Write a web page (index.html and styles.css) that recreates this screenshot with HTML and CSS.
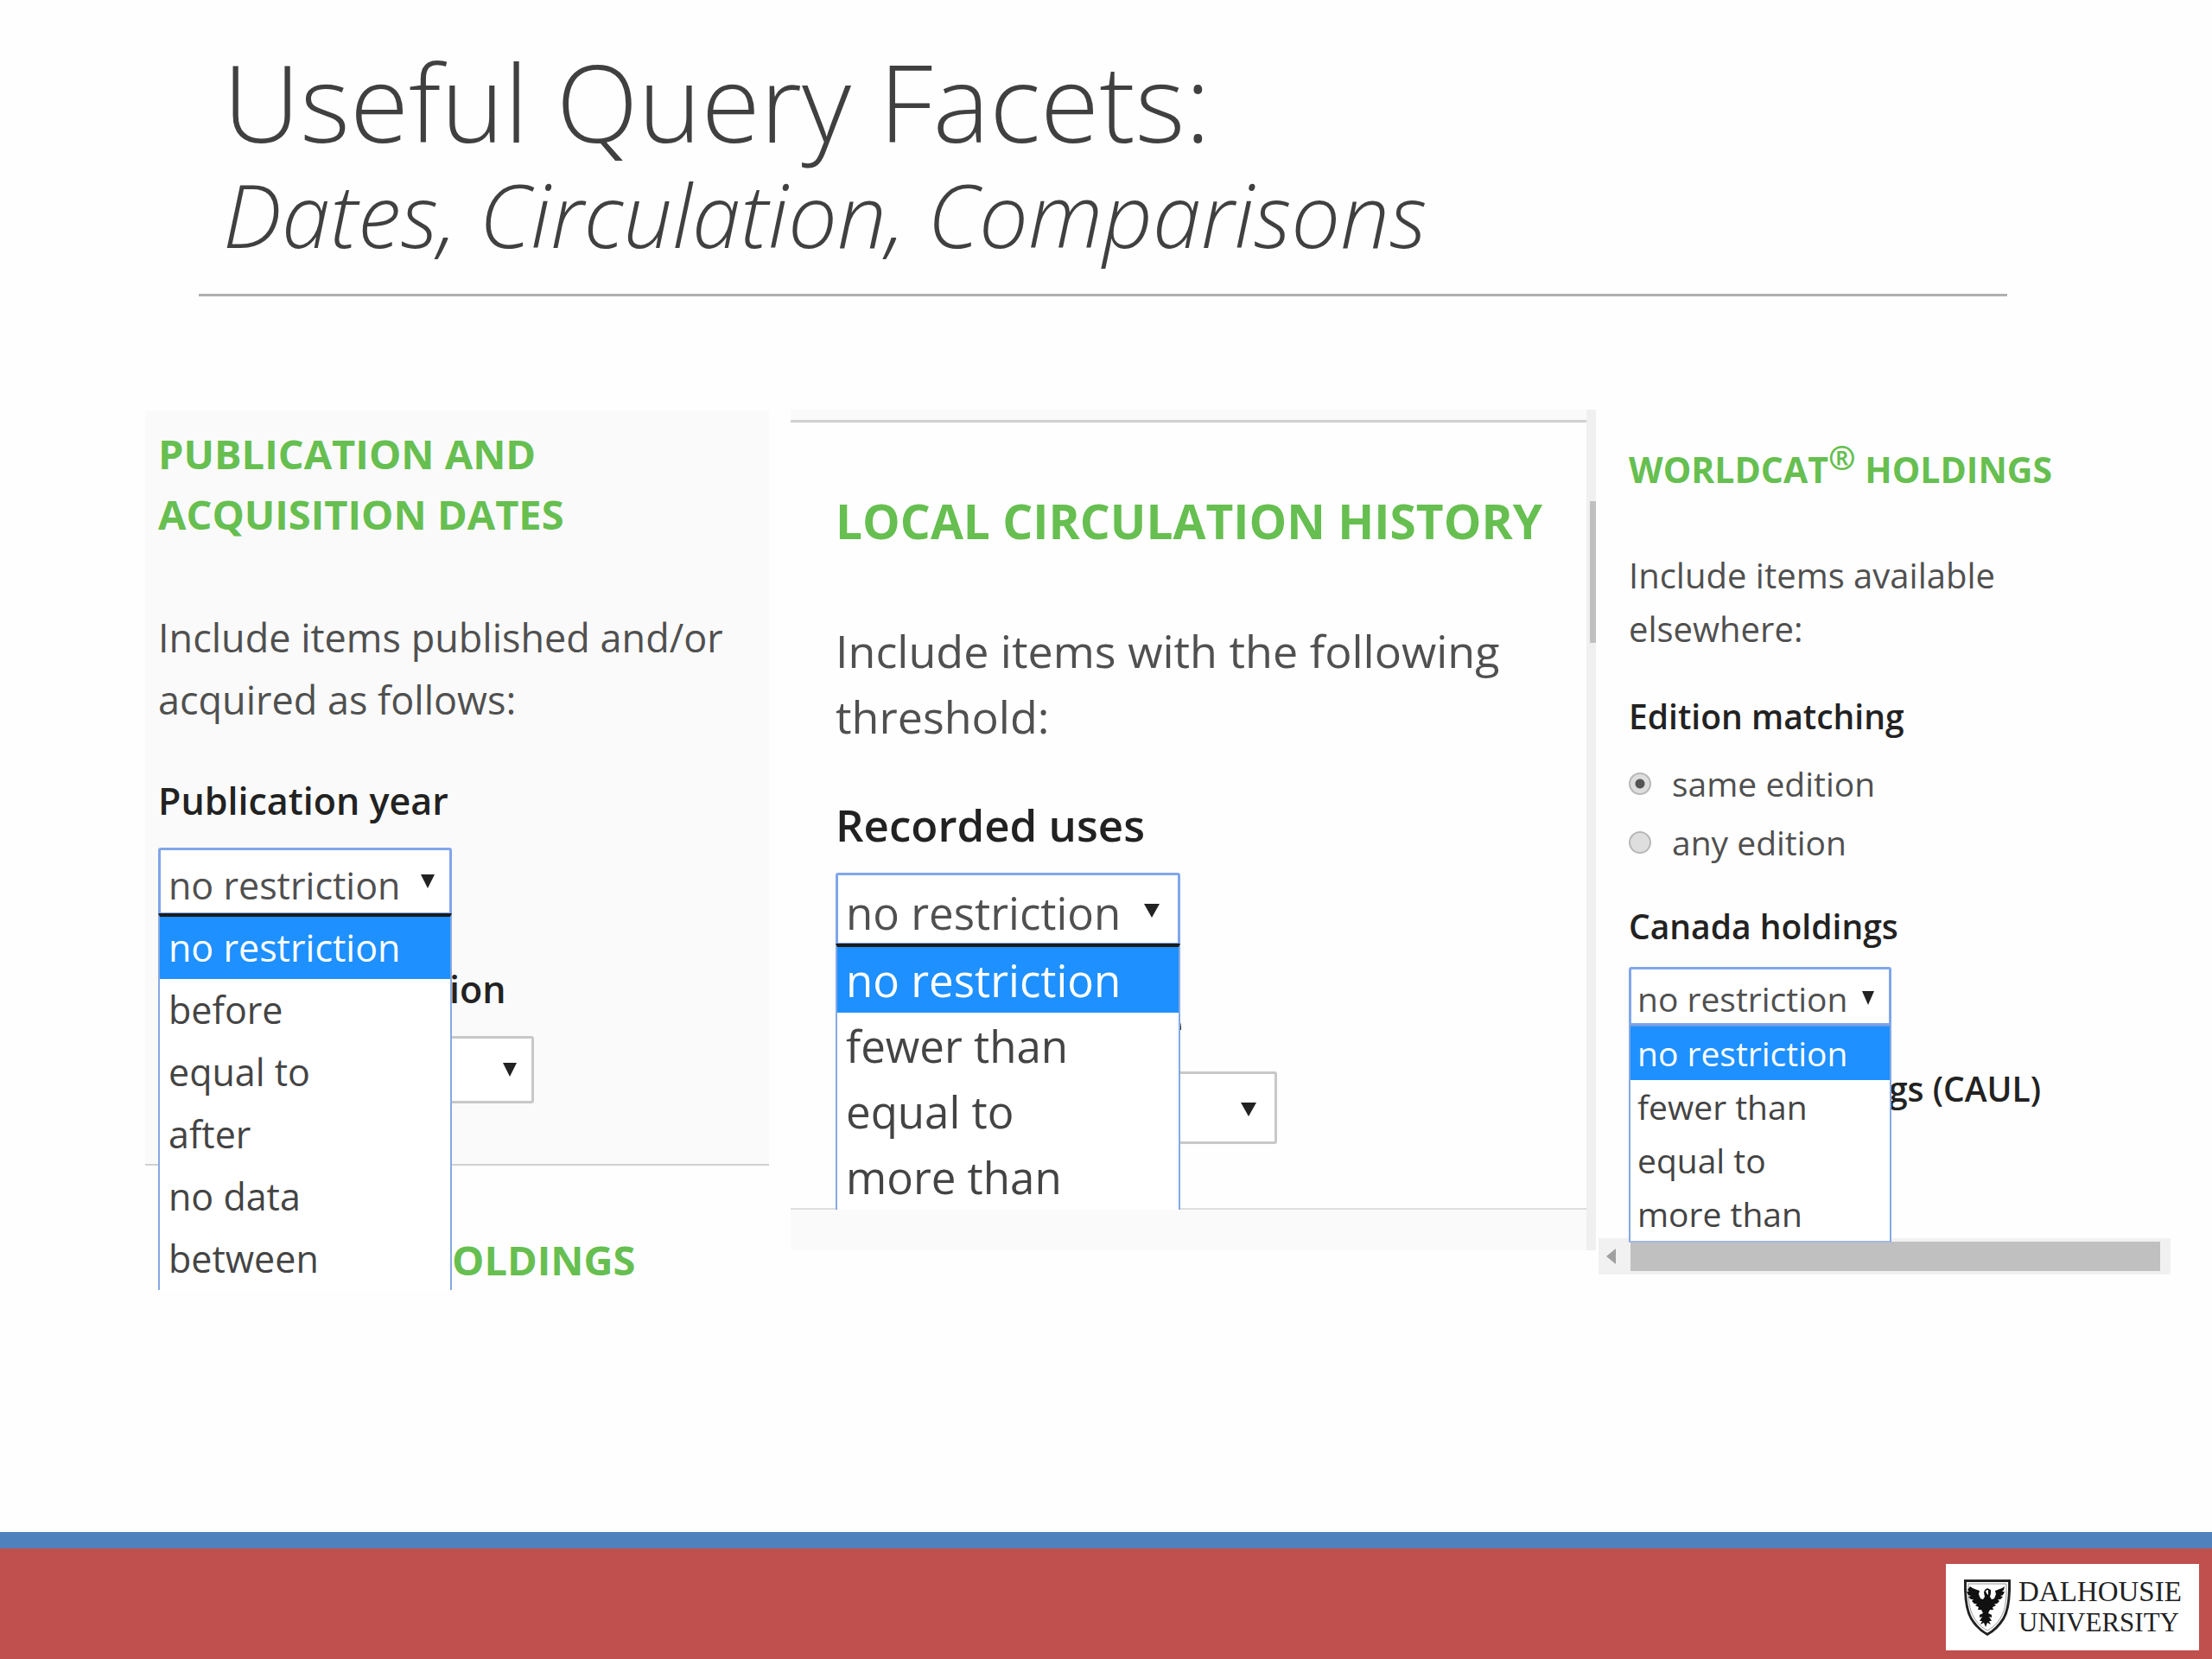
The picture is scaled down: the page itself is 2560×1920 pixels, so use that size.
FILE: index.html
```html
<!DOCTYPE html>
<html lang="en">
<head>
  <meta charset="UTF-8">
  <meta name="viewport" content="width=device-width, initial-scale=1.0">
  <title>Useful Query Facets</title>
  <link rel="stylesheet" href="styles.css">
</head>
<body>
  <header class="slide-header">
    <h1>Useful Query Facets:</h1>
    <p class="subtitle">Dates, Circulation, Comparisons</p>
  </header>

  <main class="facets">
    <!-- Publication and acquisition dates -->
    <section class="panel dates">
      <div class="facet">
        <h2>PUBLICATION AND<br>ACQUISITION DATES</h2>
        <p>Include items published and/or<br>acquired as follows:</p>
        <label class="name" for="pubYear">Publication year</label>
        <div class="picker open">
          <select id="pubYear">
            <option>no restriction</option>
          </select>
          <svg class="arrow" viewBox="0 0 16 16" preserveAspectRatio="none"><path d="M0 0h16L8 16z"/></svg>
          <ul class="menu">
            <li class="selected">no restriction</li>
            <li>before</li>
            <li>equal to</li>
            <li>after</li>
            <li>no data</li>
            <li>between</li>
          </ul>
        </div>
        <label class="name behind" for="acqYear">ion</label>
        <div class="picker wide">
          <select id="acqYear">
            <option></option>
          </select>
          <svg class="arrow" viewBox="0 0 16 16" preserveAspectRatio="none"><path d="M0 0h16L8 16z"/></svg>
        </div>
      </div>
      <div class="next-facet">
        <h2 class="behind">OLDINGS</h2>
      </div>
    </section>

    <!-- Local circulation history -->
    <section class="panel circulation">
      <div class="content">
        <div class="facet">
          <h2>LOCAL CIRCULATION HISTORY</h2>
          <p>Include items with the following<br>threshold:</p>
          <label class="name" for="uses">Recorded uses</label>
          <div class="picker open">
            <select id="uses">
              <option>no restriction</option>
            </select>
            <svg class="arrow" viewBox="0 0 16 16" preserveAspectRatio="none"><path d="M0 0h16L8 16z"/></svg>
            <ul class="menu">
              <li class="selected">no restriction</li>
              <li>fewer than</li>
              <li>equal to</li>
              <li>more than</li>
            </ul>
          </div>
          <label class="name behind" for="lastUse">e</label>
          <div class="picker wide">
            <select id="lastUse">
              <option></option>
            </select>
            <svg class="arrow" viewBox="0 0 16 16" preserveAspectRatio="none"><path d="M0 0h16L8 16z"/></svg>
          </div>
        </div>
      </div>
      <div class="scroll-y"><div class="thumb"></div></div>
    </section>

    <!-- WorldCat holdings -->
    <section class="panel worldcat">
      <div class="facet">
        <h2>WORLDCAT<sup>®</sup> HOLDINGS</h2>
        <p>Include items available<br>elsewhere:</p>
        <fieldset>
          <legend class="name">Edition matching</legend>
          <label class="radio"><input type="radio" name="edition" checked> same edition</label>
          <label class="radio"><input type="radio" name="edition"> any edition</label>
        </fieldset>
        <label class="name" for="canada">Canada holdings</label>
        <div class="picker open">
          <select id="canada">
            <option>no restriction</option>
          </select>
          <svg class="arrow" viewBox="0 0 16 16" preserveAspectRatio="none"><path d="M0 0h16L8 16z"/></svg>
          <ul class="menu">
            <li class="selected">no restriction</li>
            <li>fewer than</li>
            <li>equal to</li>
            <li>more than</li>
          </ul>
        </div>
        <div class="name behind">gs (CAUL)</div>
      </div>
      <div class="scroll-x">
        <svg viewBox="0 0 11 18"><path d="M11 0v18L0 9z"/></svg>
        <div class="thumb"></div>
      </div>
    </section>
  </main>

  <footer>
    <div class="logo">
      <svg class="shield" viewBox="0 0 54 65">
        <path d="M1.500 1.500h51c.5 20-1 34-7 44-5 8-11 14-18.500 18-7.500-4-13.500-10-18.500-18-6-10-7.500-24-7-44z" fill="#fff" stroke="#222" stroke-width="3"/>
        <path d="M5 5h44c.3 18-1 30-6.500 39-4 7-9 11.500-15.500 15-6.500-3.500-11.500-8-15.500-15C6 35 4.700 23 5 5z" fill="none" stroke="#999" stroke-width="1"/>
        <!-- eagle: wings, body, tail -->
        <path d="M7 8l3 2 8 3-1 4 2 5 3 1 2-3-1-5 1-3 3-2 4 2 0 4-1 4 2 3 3-1 2-5-1-4 8-3 3-2-1 4-2 2 3 0-2 4-3 1 3 1-3 3-3 0 2 2-3 3-3 0 2 2-4 2 1 3-4 0-2 4 4 2 0 3-3-1 3 5-3 0 2 4-4-2-2 5-2-5-4 2 2-4-3 0 3-5-3 1 0-3 4-2-2-4-4 0 1-3-4-2 2-2-3 0-3-3 2-2-3 0-3-3 3-1-3-1-2-4 3 0-2-2z" fill="#111"/>
        <path d="M25 13l3-1 0 6-2-2z" fill="#fff"/>
      </svg>
      <div class="logo-text">
        <span class="dalhousie">DALHOUSIE</span>
        <span class="university">UNIVERSITY</span>
      </div>
    </div>
  </footer>
</body>
</html>
```
FILE: styles.css
```css
* {
  box-sizing: border-box;
}

body {
  margin: 0;
  min-height: 100vh;
  display: flex;
  flex-direction: column;
  background-color: #fefefe;
  color: #505050;
  font-family: "Open Sans", "Noto Sans", sans-serif;
}

h1, h2, p, ul, fieldset, legend {
  margin: 0;
  padding: 0;
  border: none;
}

/* title */
.slide-header {
  margin: 0 237px 0 230px;
  padding: 49px 28px 29px;
  border-bottom: 3px solid #b0b0b0;
  color: #404040;
}

h1 {
  font-size: 124px;
  line-height: 136px;
  font-weight: 300;
}

.subtitle {
  font-size: 101px;
  line-height: 126px;
  font-weight: 300;
  font-style: italic;
}

/* three panels */
.facets {
  display: grid;
  grid-template-columns: 747fr 935fr 662fr;
  align-items: start;
  margin: 131px 48px 0 168px;
}

.panel {
  position: relative;
  white-space: nowrap;
}

h2 {
  color: #66bf50;
  font-size: var(--head);
  line-height: var(--line);
  font-weight: 700;
}

.panel p {
  font-size: var(--text);
  line-height: var(--line);
}

.name {
  display: block;
  color: #222;
  font-size: var(--option);
  line-height: var(--line);
  font-weight: 600;
}

/* text that shows beside an open menu */
.behind {
  padding-left: calc(var(--menu) - 3px);
}

.picker {
  position: relative;
  width: var(--menu);
  margin-top: 18px;
  font-size: var(--option);
}

.picker.wide {
  width: var(--wide);
}

.picker.open {
  z-index: 1;
}

select {
  appearance: none;
  display: block;
  width: 100%;
  height: var(--box);
  padding: 8px 9px 0;
  border: 3px solid #c8c8c8;
  border-radius: 3px;
  background-color: #fff;
  color: #505050;
  font: inherit;
}

.open select {
  border-color: #7fa6ea;
}

.arrow {
  position: absolute;
  top: var(--arrow-top);
  right: 20px;
  width: var(--arrow);
  height: 16px;
  fill: #222;
}

.menu {
  position: absolute;
  top: 100%;
  left: 0;
  width: 100%;
  margin-top: -2px;
  border: 2px solid #86a9e2;
  border-top: 4px solid #1c1c1c;
  border-bottom: none;
  background-color: #fff;
  color: #444;
  list-style: none;
  line-height: var(--line);
}

.menu li {
  padding-left: 10px;
}

.menu .selected {
  background-color: #1e90ff;
  color: #fff;
}

/* dates */
.dates {
  --head: 47px;
  --text: 45px;
  --option: 43px;
  --line: 72px;
  --menu: 340px;
  --wide: 435px;
  --box: 78px;
  --arrow: 16px;
  --arrow-top: 31px;
  margin: 2px 25px 0 0;
  overflow: hidden;
}

.dates h2 {
  line-height: 70px;
}

.dates p {
  margin: 72px 0 45px;
}

.dates .facet {
  padding: 14px 15px 70px;
  border-bottom: 2px solid #d0d0d0;
  background-color: #fafafa;
}

.dates .name.behind {
  margin-top: 50px;
}

.dates .next-facet {
  padding: 74px 18px 0;
}

/* circulation */
.circulation {
  --head: 55px;
  --text: 52px;
  --option: 51px;
  --line: 76px;
  --menu: 399px;
  --wide: 511px;
  --box: 84px;
  --arrow: 18px;
  --arrow-top: 36px;
  display: flex;
  margin-right: 3px;
}

.circulation .content {
  flex: 1;
  padding: 12px 0 47px;
  background-color: #fafafa;
}

.circulation .facet {
  padding: 76px 0 74px 52px;
  border-top: 3px solid #d0d0d0;
  border-bottom: 2px solid #dedede;
  background-color: #fefefe;
}

.circulation p {
  margin: 74px 0 49px;
}

.circulation .arrow {
  right: 24px;
}

.circulation .name.behind {
  margin-top: 52px;
  padding-left: 373px;
}

.scroll-y {
  width: 11px;
  padding: 106px 0 0 4px;
  background-color: #f0f0f0;
}

.scroll-y .thumb {
  height: 164px;
  background-color: #c0c0c0;
}

/* worldcat */
.worldcat {
  --head: 41px;
  --text: 40px;
  --option: 39px;
  --line: 62px;
  --menu: 304px;
  --box: 68px;
  --arrow: 14px;
  --arrow-top: 28px;
}

.worldcat .facet {
  padding: 38px 0 142px 35px;
}

.worldcat sup {
  line-height: 0;
  font-size: 38px;
}

.worldcat p {
  margin: 61px 0 39px;
}

.worldcat legend {
  margin-bottom: 13px;
}

.radio {
  display: flex;
  align-items: center;
  gap: 24px;
  font-size: var(--option);
  line-height: 68px;
}

.radio input {
  appearance: none;
  width: 26px;
  height: 26px;
  margin: 0;
  border: 2px solid #b8b8b8;
  border-radius: 50%;
  background-color: #dedede;
}

.radio input:checked {
  background-image: radial-gradient(circle, #555 5px, #dedede 6px);
}

fieldset + .name {
  margin-top: 32px;
}

.worldcat .picker {
  margin-top: 16px;
}

.worldcat select {
  padding: 4px 7px 0;
}

.worldcat .menu {
  margin-top: -1px;
  border-top: 2px solid #6f9be0;
  border-bottom: 2px solid #a3b8e0;
}

.worldcat .menu li {
  padding-left: 8px;
}

.worldcat .name.behind {
  margin-top: 42px;
}

.scroll-x {
  display: flex;
  align-items: center;
  gap: 17px;
  height: 42px;
  padding: 4px 12px 4px 9px;
  background-color: #f1f1f1;
}

.scroll-x svg {
  width: 11px;
  height: 26px;
  fill: #a0a0a0;
}

.scroll-x .thumb {
  flex: 1;
  height: 34px;
  background-color: #c0c0c0;
}

/* footer */
footer {
  display: flex;
  justify-content: flex-end;
  margin-top: auto;
  padding: 18px 15px 10px;
  border-top: 19px solid #4f81bd;
  background-color: #c0504d;
}

.logo {
  display: flex;
  align-items: center;
  gap: 9px;
  width: 293px;
  height: 100px;
  padding-left: 21px;
  background-color: #fff;
}

.shield {
  width: 54px;
  height: 65px;
}

.logo-text {
  color: #222;
  font-family: "Liberation Serif", serif;
  line-height: 35px;
}

.logo-text span {
  display: block;
}

.dalhousie {
  font-size: 33px;
}

.university {
  font-size: 31px;
}
```
